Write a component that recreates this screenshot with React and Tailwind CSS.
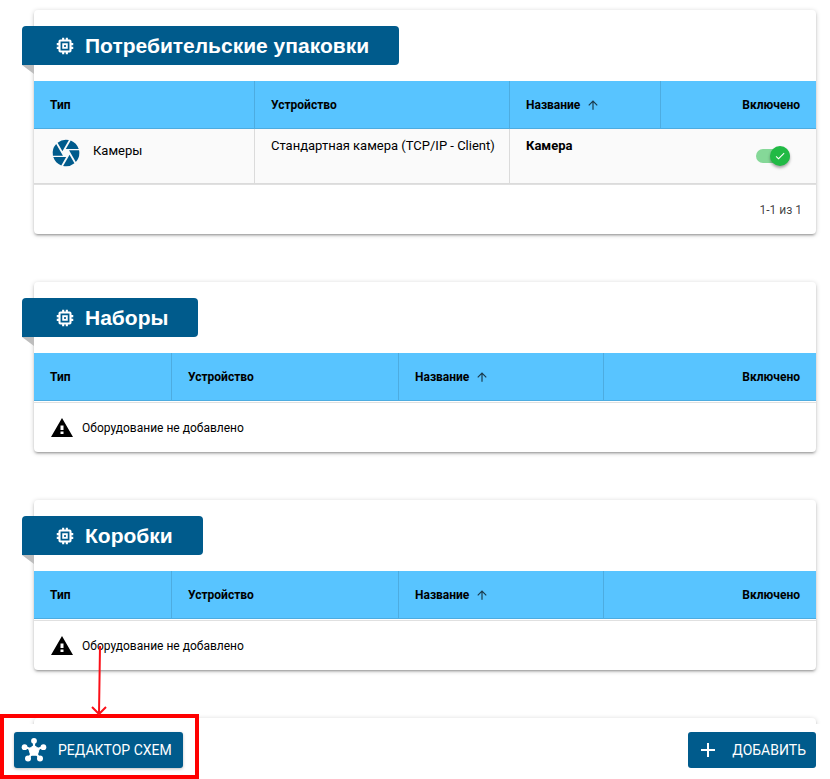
import { useState } from "react";
import { MdAdd, MdArrowUpward, MdCamera, MdCheck } from "react-icons/md";

const cardClass =
  "rounded bg-white shadow-[0_1px_5px_rgba(0,0,0,0.2),0_2px_2px_rgba(0,0,0,0.14),0_3px_1px_-2px_rgba(0,0,0,0.12)]";

function ChipIcon() {
  return (
    <svg
      className="size-[22px]"
      viewBox="0 0 24 24"
      fill="none"
      stroke="currentColor"
      strokeWidth="2.3"
      aria-hidden="true"
    >
      <rect x="6" y="6" width="12" height="12" rx="1" />
      <rect x="10" y="10" width="4" height="4" strokeWidth="2" />
      <path d="M10 3v3M14 3v3M10 18v3M14 18v3M3 10h3M3 14h3M18 10h3M18 14h3" />
    </svg>
  );
}

function WarningIcon() {
  return (
    <svg className="size-6" viewBox="0 0 24 24" fill="currentColor" aria-hidden="true">
      <path
        fillRule="evenodd"
        d="M1 21h22L12 2 1 21zM10.5 15.5h3v2.5h-3v-2.5zM10.5 9.5h3v4.5h-3v-4.5z"
      />
    </svg>
  );
}

function SchemeIcon() {
  return (
    <svg className="size-[26px]" viewBox="0 0 26 26" fill="currentColor" aria-hidden="true">
      <path
        d="M13 14V4M13 13L3.5 10M13 13L22.5 10M13 13L7 22M13 13L19 22"
        stroke="currentColor"
        strokeWidth="2.2"
      />
      <path d="M13 8.4l5.2 3.6-1.9 6.2H9.7L7.8 12z" stroke="currentColor" strokeLinejoin="round" />
      <circle cx="13" cy="3.8" r="2.9" />
      <circle cx="3.6" cy="10.2" r="2.9" />
      <circle cx="22.4" cy="10.2" r="2.9" />
      <circle cx="7" cy="21.6" r="3" />
      <circle cx="19" cy="21.6" r="3" />
    </svg>
  );
}

function Ribbon({ title }) {
  return (
    <div className="relative -ml-3 flex h-[39px] w-fit items-center gap-[9px] rounded rounded-bl-none bg-[#005b8c] pr-[30px] pl-8 text-white">
      <ChipIcon />
      <h2 className="font-['Liberation_Sans',Arial,sans-serif] text-[21px] leading-6 font-bold">
        {title}
      </h2>
      <span className="absolute top-full left-0 h-[9px] w-3 bg-[#bdbdbd] [clip-path:polygon(0_0,100%_0,100%_100%)]" />
    </div>
  );
}

function HeaderRow() {
  const cell =
    "h-12 border-b border-black/12 px-4 font-bold not-last:border-r";
  return (
    <thead className="bg-[#58c4ff]">
      <tr>
        <th scope="col" className={`${cell} text-left`}>Тип</th>
        <th scope="col" className={`${cell} text-left`}>Устройство</th>
        <th scope="col" className={`${cell} text-left`} aria-sort="ascending">
          <span className="flex items-center gap-1.5">
            Название
            <MdArrowUpward className="size-3.5 opacity-70" aria-hidden="true" />
          </span>
        </th>
        <th scope="col" className={`${cell} text-right`}>Включено</th>
      </tr>
    </thead>
  );
}

function Toggle({ label }) {
  const [on, setOn] = useState(true);
  return (
    <label className="relative inline-flex h-5 w-[34px] cursor-pointer items-center">
      <input
        type="checkbox"
        role="switch"
        aria-label={label}
        checked={on}
        onChange={(e) => setOn(e.target.checked)}
        className="peer h-3.5 w-full cursor-pointer appearance-none rounded-full bg-black/30 checked:bg-[#21ba45]/54"
      />
      <span className="pointer-events-none absolute left-0 flex size-5 items-center justify-center rounded-full bg-gray-400 text-white shadow-[0_2px_3px_rgba(0,0,0,0.35)] peer-checked:left-3.5 peer-checked:bg-[#21ba45]">
        <MdCheck className="size-3" aria-hidden="true" />
      </span>
    </label>
  );
}

function EmptySection({ title }) {
  return (
    <section className={`${cardClass} pt-4`}>
      <Ribbon title={title} />
      <table className="mt-4 w-full table-fixed border-separate border-spacing-0 text-[12px]">
        <colgroup>
          <col className="w-[138px]" />
          <col className="w-[227px]" />
          <col className="w-[205px]" />
          <col />
        </colgroup>
        <HeaderRow />
      </table>
      <div className="mt-px flex h-[50px] items-center gap-2 border-t border-black/12 px-4 text-[12px]">
        <WarningIcon />
        Оборудование не добавлено
      </div>
    </section>
  );
}

export default function App() {
  return (
    <div className="relative h-screen overflow-hidden bg-white font-['Roboto',sans-serif] text-black">
      <main className="flex flex-col gap-12 pt-2.5 pr-3.5 pl-[34px]">
        <section className={`${cardClass} pt-4`}>
          <Ribbon title="Потребительские упаковки" />
          <table className="mt-4 w-full table-fixed border-separate border-spacing-0 text-[12px]">
            <colgroup>
              <col className="w-[221px]" />
              <col className="w-[255px]" />
              <col className="w-[151px]" />
              <col />
            </colgroup>
            <HeaderRow />
            <tbody className="bg-[#fafafa]">
              <tr className="h-[55px] align-top text-[13px] leading-[18px]">
                <td className="border-r border-b border-black/12 px-4 pt-2">
                  <span className="flex items-start gap-[11px] leading-7">
                    <MdCamera className="size-8 text-[#005b8c]" aria-hidden="true" />
                    Камеры
                  </span>
                </td>
                <td className="border-r border-b border-black/12 px-4 pt-2 whitespace-nowrap">
                  Стандартная камера (TCP/IP - Client)
                </td>
                <td className="border-b border-black/12 px-4 pt-2 font-bold">Камера</td>
                <td className="border-b border-black/12 pt-[17px] pr-[26px] text-right">
                  <Toggle label="Камера включена" />
                </td>
              </tr>
            </tbody>
          </table>
          <div className="flex h-[50px] items-center justify-end border-t border-black/12 px-3.5 text-[12px] text-black/75">
            1-1 из 1
          </div>
        </section>
        <EmptySection title="Наборы" />
        <EmptySection title="Коробки" />
        <section className={`${cardClass} h-20`} />
      </main>

      <footer className="fixed inset-x-0 bottom-0 flex h-[55px] items-start justify-between bg-white px-3.5 pt-2 text-[14px] text-white">
        <button
          type="button"
          className="flex h-9 items-center gap-[11px] rounded-[3px] bg-[#005b8c] pr-[11px] pl-[7px] shadow-[0_1px_3px_rgba(0,0,0,0.25)]"
        >
          <SchemeIcon />
          РЕДАКТОР СХЕМ
        </button>
        <button
          type="button"
          className="flex h-9 items-center gap-3 rounded-[3px] bg-[#005b8c] pr-2.5 pl-2"
        >
          <MdAdd className="size-6" aria-hidden="true" />
          ДОБАВИТЬ
        </button>
      </footer>

      <div className="pointer-events-none fixed bottom-0 left-0 h-[65px] w-[199px] border-4 border-[#ff0000]" />
      <svg
        className="pointer-events-none fixed bottom-[61px] left-[90px] h-[74px] w-5"
        viewBox="0 0 20 74"
        fill="none"
        stroke="#fb0f18"
        strokeWidth="2"
        aria-hidden="true"
      >
        <path d="M10 2 L9 70 M2 63 L9 70 L16 63" />
      </svg>
    </div>
  );
}
